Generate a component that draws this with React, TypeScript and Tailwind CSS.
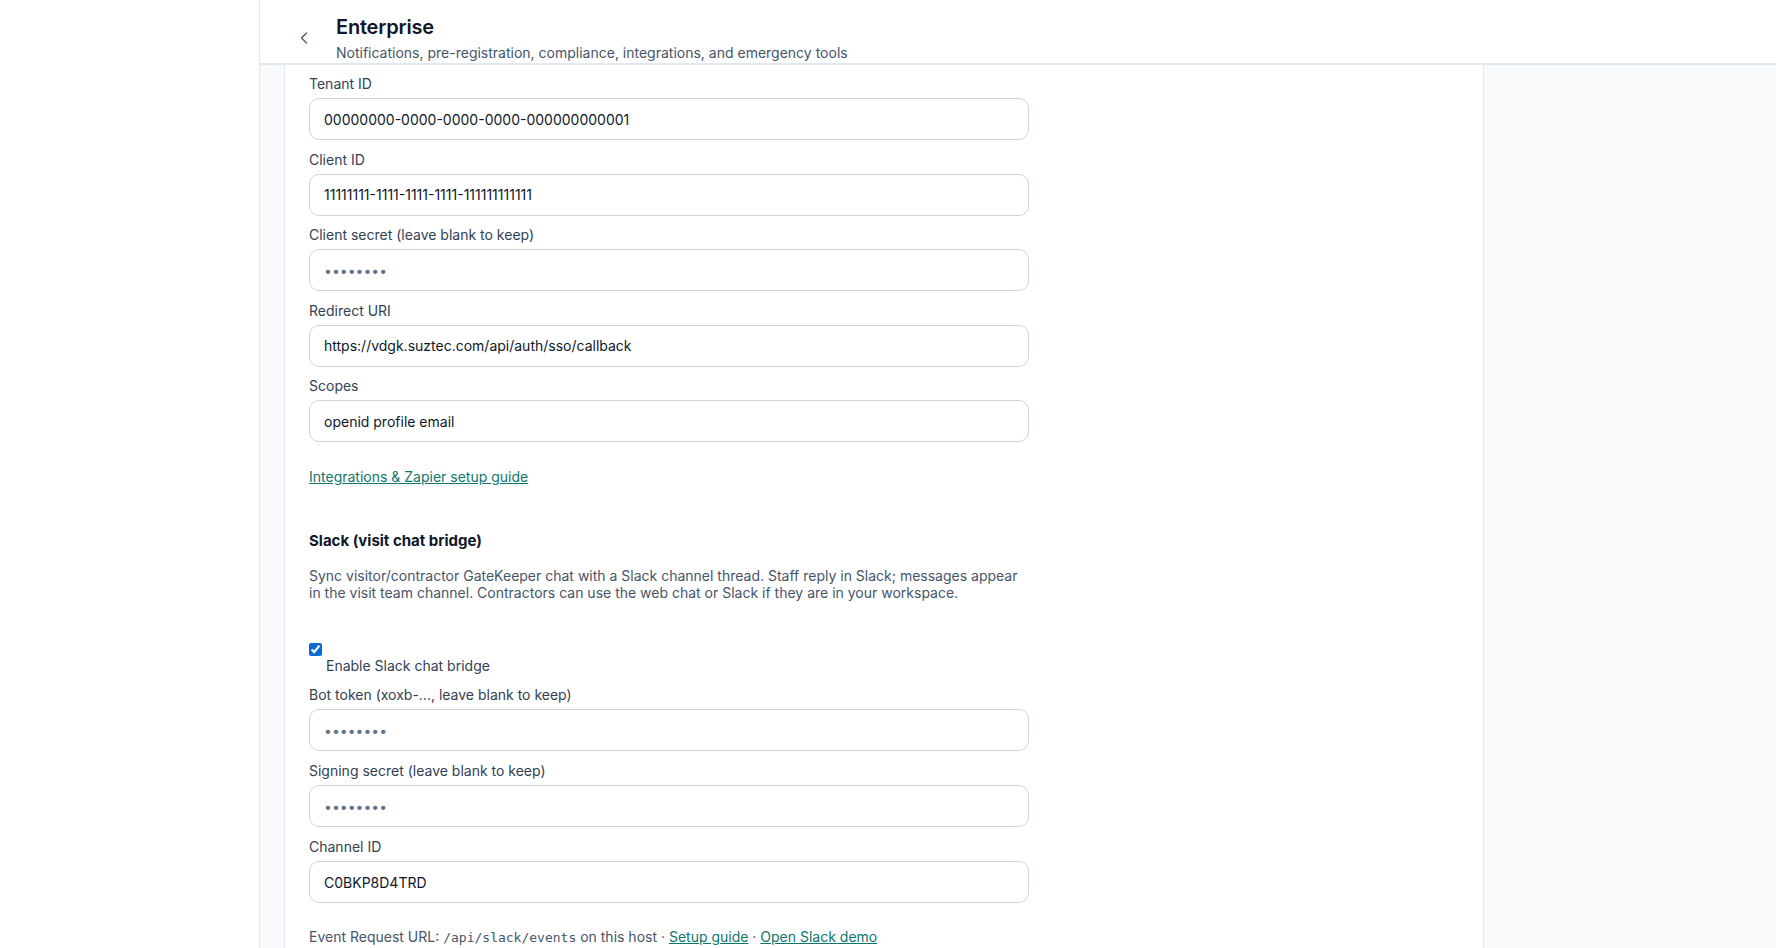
import { ChevronLeft } from 'lucide-react';

const font = { fontFamily: 'Inter, "Noto Sans", sans-serif' };

function Field({ label, value, secret }: { label: string; value?: string; secret?: boolean }) {
  return (
    <div>
      <label className="block text-sm leading-5 text-[#334155] mb-1">{label}</label>
      {secret ? (
        <input
          type="password"
          placeholder="••••••••"
          className="w-full h-[42px] rounded-[10px] border border-[#cbd5e1] bg-white px-3.5 text-sm text-[#0f172a] placeholder:text-[#64748b] outline-none"
        />
      ) : (
        <input
          type="text"
          defaultValue={value}
          className="w-full h-[42px] rounded-[10px] border border-[#cbd5e1] bg-white px-3.5 text-sm text-[#0f172a] outline-none"
        />
      )}
    </div>
  );
}

export default function App() {
  return (
    <div className="flex h-[948px] overflow-hidden bg-white" style={font}>
      <aside className="w-[260px] shrink-0 bg-white border-r border-[#e2e8f0]" />

      <div className="flex-1 flex flex-col min-w-0">
        <header className="h-[65px] shrink-0 flex items-center gap-4 pl-7 pt-[13px] bg-white border-b-2 border-[#e2e8f0]">
          <button className="w-8 h-8 flex items-center justify-center text-[#475569]">
            <ChevronLeft size={20} strokeWidth={1.5} />
          </button>
          <div>
            <h1 className="text-xl leading-7 font-semibold tracking-[-0.2px] text-[#0f172a]">Enterprise</h1>
            <p className="mt-[2px] text-sm leading-5 text-[#475569]">
              Notifications, pre-registration, compliance, integrations, and emergency tools
            </p>
          </div>
        </header>

        <main className="flex-1 bg-[#f8fafc] pl-6 overflow-hidden">
          <div className="w-[1200px] h-full bg-white border-x border-[#e2e8f0] px-6 pt-[9px]">
            <div className="max-w-[720px]">
              <div className="flex flex-col gap-[9.5px]">
                <Field label="Tenant ID" value="00000000-0000-0000-0000-000000000001" />
                <Field label="Client ID" value="11111111-1111-1111-1111-111111111111" />
                <Field label="Client secret (leave blank to keep)" secret />
                <Field label="Redirect URI" value="https://vdgk.suztec.com/api/auth/sso/callback" />
                <Field label="Scopes" value="openid profile email" />
              </div>

              <a href="#" className="block mt-[25px] text-sm leading-5 text-[#0f766e] underline w-fit">
                Integrations &amp; Zapier setup guide
              </a>

              <h2 className="mt-[42px] text-[15px] leading-6 font-bold text-[#0f172a]">Slack (visit chat bridge)</h2>
              <p className="mt-[14px] text-sm leading-[17px] text-[#475569]">
                Sync visitor/contractor GateKeeper chat with a Slack channel thread. Staff reply in Slack; messages appear
                in the visit team channel. Contractors can use the web chat or Slack if they are in your workspace.
              </p>

              <label className="block mt-[42px]">
                <input type="checkbox" defaultChecked className="block w-[13px] h-[13px] m-0 accent-[#0b6bd3]" />
                <span className="block pl-[17px] text-sm leading-5 text-[#334155]">Enable Slack chat bridge</span>
              </label>

              <div className="mt-[9px] flex flex-col gap-[10px]">
                <Field label="Bot token (xoxb-..., leave blank to keep)" secret />
                <Field label="Signing secret (leave blank to keep)" secret />
                <Field label="Channel ID" value="C0BKP8D4TRD" />
              </div>

              <p className="mt-[24px] text-sm leading-5 text-[#475569]">
                Event Request URL:{' '}
                <code className="text-[13px]" style={{ fontFamily: '"DejaVu Sans Mono", "Liberation Mono", monospace' }}>
                  /api/slack/events
                </code>{' '}
                on this host ·{' '}
                <a href="#" className="text-[#0f766e] underline">Setup guide</a> ·{' '}
                <a href="#" className="text-[#0f766e] underline">Open Slack demo</a>
              </p>
            </div>
          </div>
        </main>
      </div>
    </div>
  );
}
